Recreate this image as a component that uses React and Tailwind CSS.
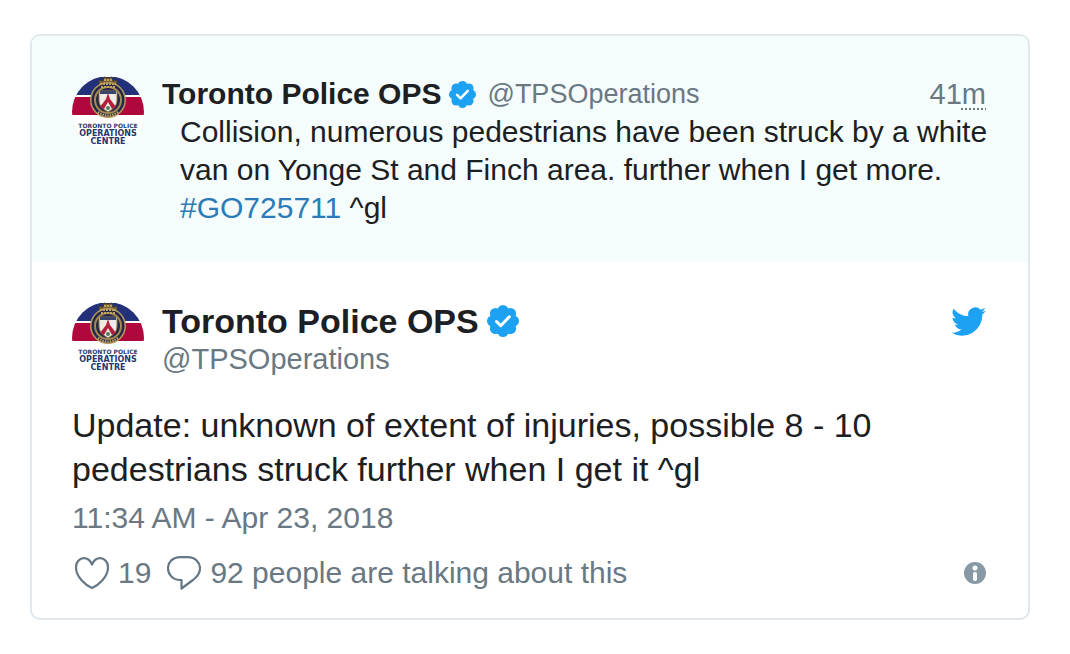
import React from 'react';

const Avatar = () => (
  <svg viewBox="0 0 72 72" className="size-[72px] shrink-0" role="img" aria-label="Toronto Police Operations Centre">
    <clipPath id="avatar-clip">
      <circle cx="36" cy="36" r="36" />
    </clipPath>
    <g clipPath="url(#avatar-clip)">
      <rect width="72" height="72" fill="#fff" />
      <rect y="1" width="72" height="19" fill="#23307a" />
      <rect y="21" width="72" height="18" fill="#b0083c" />
      <rect y="19" width="72" height="2" fill="#fff" />
    </g>
    <path d="M27 9V4l4 1 1-4 4 1 4-1 1 4 4-1v5z" fill="#7a6435" stroke="#3a3430" strokeWidth=".8" />
    <circle cx="36" cy="24" r="18" fill="#b49a5c" />
    <circle cx="36" cy="24" r="16.500" fill="#25274a" />
    <circle cx="36" cy="24" r="13" fill="none" stroke="#a38a50" strokeWidth="2" />
    <path d="M28 8h16M29 11h14M32 4h8" stroke="#c0a262" strokeWidth="1.8" strokeDasharray="2 1" />
    <path d="M27 15h18v9c0 6-4 9-9 12-5-3-9-6-9-12z" fill="#efebe6" stroke="#8f7740" />
    <path d="M28 15h16v3H28z" fill="#39466f" />
    <path d="m36 17 2 6 6 8-4 2-4-7-4 7-4-2 6-8z" fill="#b51e3b" />
    <circle cx="36" cy="32" r="2" fill="#4c7a5c" />
    <path d="M26 36q10 7 20 0" fill="none" stroke="#c0a262" strokeWidth="2.200" strokeDasharray="1.5 1" />
    <g fill="#26366f" textAnchor="middle" fontWeight="bold" fontFamily="DejaVu Sans, sans-serif">
      <text x="36" y="52" fontSize="6">TORONTO POLICE</text>
      <text x="36" y="60" fontSize="8">OPERATIONS</text>
      <text x="36" y="68" fontSize="8">CENTRE</text>
    </g>
  </svg>
);

const Verified = ({ className }) => (
  <svg viewBox="0 0 32 32" className={className} role="img" aria-label="Verified account">
    <g fill="#1da1f2">
      <circle cx="16" cy="16" r="12" />
      <circle cx="16" cy="5.5" r="5.5" />
      <circle cx="16" cy="26.5" r="5.5" />
      <circle cx="5.5" cy="16" r="5.5" />
      <circle cx="26.5" cy="16" r="5.5" />
      <circle cx="8.6" cy="8.6" r="5.7" />
      <circle cx="23.4" cy="8.6" r="5.7" />
      <circle cx="8.6" cy="23.4" r="5.7" />
      <circle cx="23.4" cy="23.4" r="5.7" />
    </g>
    <path d="m9.5 16.5 4.2 4.2 8.6-8.9" fill="none" stroke="#fff" strokeWidth="3" strokeLinecap="round" strokeLinejoin="round" />
  </svg>
);

const TwitterBird = () => (
  <svg viewBox="0 0 24 20" className="h-[29px] w-[35px]" fill="#1da1f2" aria-hidden="true">
    <path d="M24 2.6c-.9.4-1.8.7-2.8.8 1-.6 1.8-1.6 2.2-2.7-1 .6-2 1-3.1 1.2A4.92 4.92 0 0 0 11.9 6.4 14 14 0 0 1 1.7 1.2 4.93 4.93 0 0 0 3.2 7.8c-.8 0-1.6-.2-2.2-.6v.1c0 2.4 1.7 4.4 3.9 4.8-.7.2-1.5.2-2.2.1.6 2 2.4 3.4 4.6 3.4A9.9 9.9 0 0 1 0 17.6 13.95 13.95 0 0 0 21.5 5.1c1-.7 1.8-1.6 2.5-2.5z" />
  </svg>
);

const Heart = () => (
  <svg viewBox="0 0 34 32" className="h-[32px] w-[34px]" fill="none" stroke="#657786" strokeWidth="2.2" strokeLinejoin="round" aria-hidden="true">
    <path d="M17 31C10.500 28 1 20 1 10.500 1 5 4.500 1.200 9 1.200c3.500 0 6.200 2 8 6.300 1.800-4.300 4.500-6.300 8-6.300 4.500 0 8 3.800 8 9.300C33 20 23.500 28 17 31z" />
  </svg>
);

const Reply = () => (
  <svg viewBox="0 0 34 34" className="h-[34px] w-[34px]" fill="none" stroke="#657786" strokeWidth="2.2" strokeLinejoin="round" aria-hidden="true">
    <path d="M13 1.200h8c7 0 12 5 12 11.300 0 5-2.500 8-7 11.500L14.500 32.500v-8.500H13C6 24 1 18.500 1 12.500 1 6 6 1.200 13 1.200z" />
  </svg>
);

const Info = () => (
  <svg viewBox="0 0 22 22" className="size-[22px]" aria-hidden="true">
    <circle cx="11" cy="11" r="11" fill="#8899a6" />
    <circle cx="11" cy="6" r="2.500" fill="#fff" />
    <rect x="9" y="10" width="4" height="9" rx="1.800" fill="#fff" />
  </svg>
);

const QuotedTweet = () => (
  <article className="flex gap-[18px] bg-[#f5fcfc] pt-[40px] pr-[42px] pb-[35px] pl-[40px]">
    <Avatar />
    <div className="min-w-0 grow">
      <header className="-mt-px flex items-center">
        <a href="#profile" className="flex items-center">
          <span className="font-bold">Toronto Police OPS</span>
          <Verified className="mr-[11px] ml-[8px] size-[27px]" />
          <span className="text-[27px] text-[#697882]">@TPSOperations</span>
        </a>
        <time className="ml-auto text-[29px] text-[#697882]">
          41<abbr title="minutes" className="underline decoration-dotted decoration-2 underline-offset-4">m</abbr>
        </time>
      </header>
      <p className="pl-[18px] whitespace-nowrap">
        Collision, numerous pedestrians have been struck by a white
        <br />
        van on Yonge St and Finch area. further when I get more.
        <br />
        <a href="#GO725711" className="text-[#2b7bb9]">#GO725711</a> ^gl
      </p>
    </div>
  </article>
);

const MainTweet = () => (
  <article className="pt-[40px] pr-[42px] pb-[26px] pl-[40px]">
    <header className="flex items-start gap-[18px]">
      <Avatar />
      <a href="#profile" className="block">
        <span className="flex items-center gap-[8px] text-[34px] font-bold">
          Toronto Police OPS
          <Verified className="size-[32px]" />
        </span>
        <span className="block text-[29px] text-[#697882]">@TPSOperations</span>
      </a>
      <a href="#tweet" aria-label="View on Twitter" className="mt-[5px] ml-auto">
        <TwitterBird />
      </a>
    </header>
    <p className="mt-[25px] text-[34px] leading-[44px]">
      Update: unknown of extent of injuries, possible 8 - 10
      <br />
      pedestrians struck further when I get it ^gl
    </p>
    <a href="#tweet" className="mt-[8px] block text-[#697882]">
      <time dateTime="2018-04-23T11:34">11:34 AM - Apr 23, 2018</time>
    </a>
    <footer className="mt-[17px] flex items-center text-[#697882]">
      <button type="button" aria-label="Like" className="flex items-center gap-[9px] pl-[3px]">
        <Heart />
        19
      </button>
      <a href="#replies" className="ml-[16px] flex items-center gap-[9px]">
        <Reply />
        92 people are talking about this
      </a>
      <a href="#privacy" aria-label="Twitter Ads info and privacy" className="ml-auto">
        <Info />
      </a>
    </footer>
  </article>
);

export default function App() {
  return (
    <main className="bg-white py-[34px] pr-[40px] pl-[30px] font-['Liberation_Sans',Arial,sans-serif] text-[30px] leading-[38px] text-[#1c2022]">
      <div className="overflow-hidden rounded-[10px] border-2 border-[#e1e8ed]">
        <QuotedTweet />
        <MainTweet />
      </div>
    </main>
  );
}
